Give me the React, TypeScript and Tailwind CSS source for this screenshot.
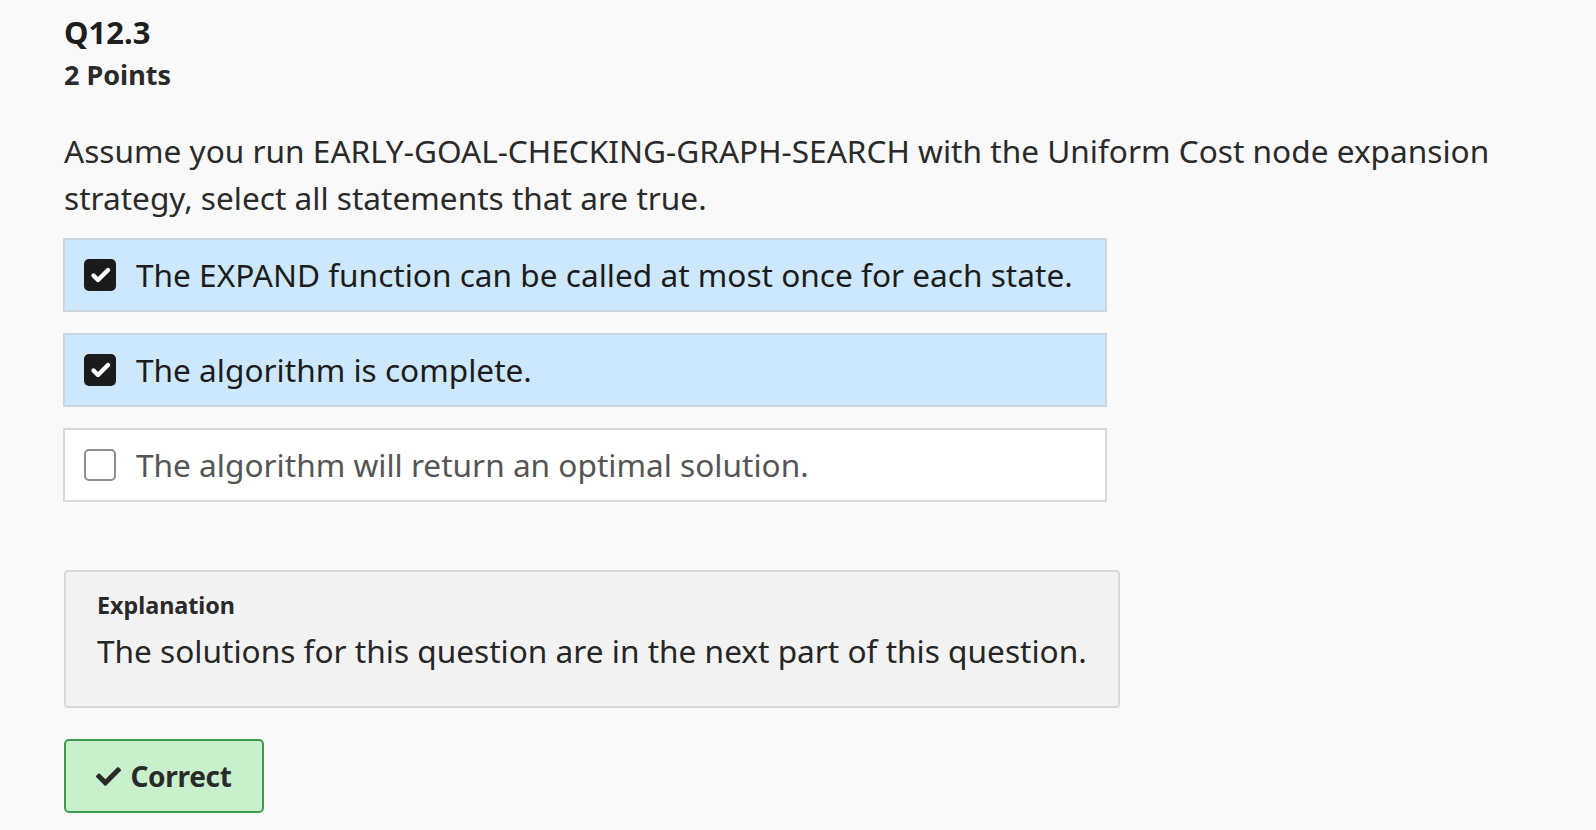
import * as React from 'react'

interface OptionProps {
  label: string
  checked: boolean
}

function CheckMark() {
  return (
    <svg viewBox="0 0 32 32" className="w-[32px] h-[32px]">
      <polyline
        points="9.5,16.5 14,21 24,11"
        fill="none"
        stroke="#ffffff"
        strokeWidth="4.4"
        strokeLinecap="round"
        strokeLinejoin="round"
      />
    </svg>
  )
}

function Option({ label, checked }: OptionProps) {
  return (
    <div
      className={
        checked
          ? 'flex items-center h-[74px] w-[1044px] border-2 border-[#cbd6df] bg-[#cde8fc] pl-[19px]'
          : 'flex items-center h-[74px] w-[1044px] border-2 border-[#d9d9d9] bg-white pl-[19px]'
      }
    >
      {checked ? (
        <div className="w-[32px] h-[32px] rounded-[5px] bg-[#1b1b1b] shrink-0">
          <CheckMark />
        </div>
      ) : (
        <div className="w-[32px] h-[32px] rounded-[5px] border-2 border-[#8e8e8e] bg-white shrink-0" />
      )}
      <span
        className={
          checked
            ? 'ml-[20px] text-[31.6px] leading-[48px] text-[#1c1c1c] whitespace-nowrap'
            : 'ml-[20px] text-[31.6px] leading-[48px] text-[#555555] whitespace-nowrap'
        }
      >
        {label}
      </span>
    </div>
  )
}

export default function App() {
  return (
    <div
      className="min-h-screen bg-[#f9f9f9] px-[64px] pt-[12px] pb-[20px] text-[#222222]"
      style={{ fontFamily: '"Noto Sans", "Open Sans", sans-serif' }}
    >
      <div className="text-[31px] leading-[40px] font-bold text-[#1e1e1e]">Q12.3</div>
      <div className="mt-[5px] text-[27px] leading-[36px] font-bold text-[#2a2a2a]">2 Points</div>

      <p className="mt-[34px] max-w-[1468px] text-[31.6px] leading-[47px] text-[#2a2a2a]">
        Assume you run EARLY-GOAL-CHECKING-GRAPH-SEARCH with the Uniform Cost node expansion
        strategy, select all statements that are true.
      </p>

      <div className="mt-[17px] flex flex-col gap-[21px] -ml-px">
        <Option label="The EXPAND function can be called at most once for each state." checked />
        <Option label="The algorithm is complete." checked />
        <Option label="The algorithm will return an optimal solution." checked={false} />
      </div>

      <div className="mt-[68px] w-[1056px] h-[138px] rounded-[4px] border-2 border-[#dadada] bg-[#f3f3f3] pl-[31px] pt-[17px]">
        <div className="text-[23.3px] leading-[32px] font-bold text-[#2a2a2a]">Explanation</div>
        <div className="mt-[6px] text-[31.6px] leading-[48px] text-[#262626] whitespace-nowrap">
          The solutions for this question are in the next part of this question.
        </div>
      </div>

      <div className="mt-[31px] flex items-center justify-center gap-[9px] w-[200px] h-[74px] rounded-[5px] border-2 border-[#3d9b48] bg-[#c8f0cd] text-[28px] leading-[40px] font-bold tracking-[-0.3px] text-[#2a2a2a]">
        <svg viewBox="0 0 512 512" className="w-[25px] h-[25px]" fill="#2a2a2a">
          <path d="M173.898 439.404l-166.4-166.4c-9.997-9.997-9.997-26.206 0-36.204l36.203-36.204c9.997-9.998 26.207-9.998 36.204 0L192 312.69 432.095 72.596c9.997-9.997 26.207-9.997 36.204 0l36.203 36.204c9.997 9.997 9.997 26.206 0 36.204l-294.4 294.401c-9.998 9.997-26.207 9.997-36.204-.001z" />
        </svg>
        <span>Correct</span>
      </div>
    </div>
  )
}
